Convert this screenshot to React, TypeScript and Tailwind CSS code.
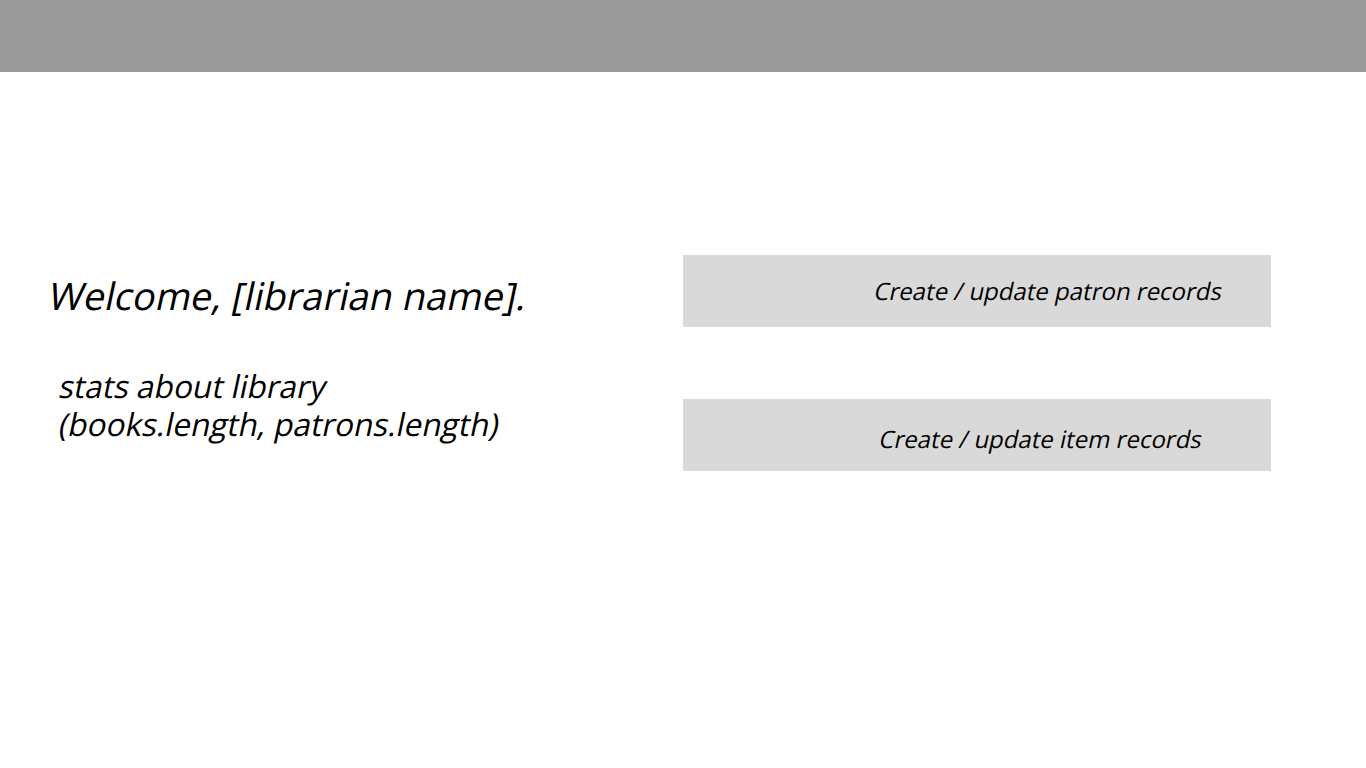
export default function App() {
  return (
    <div className="min-h-[768px] bg-white font-['Open_Sans',sans-serif] text-black">
      <header className="h-[72px] bg-[#9b9b9b]" />
      <main className="flex pt-[183px]">
        <section className="w-[683px] pl-[50px]">
          <h1 className="mt-[16px] text-[38px] leading-[48px] font-normal">
            <span className="inline-block -skew-x-12">Welcome, [librarian name].</span>
          </h1>
          <div className="mt-[48px] pl-[10px] text-[31.5px] leading-[38px]">
            <p>
              <span className="inline-block -skew-x-12">stats about library</span>
            </p>
            <p>
              <span className="inline-block -skew-x-12">(books.length, patrons.length)</span>
            </p>
          </div>
        </section>
        <section className="flex w-[588px] flex-col gap-[72px]">
          <button className="flex h-[72px] items-center bg-[#d9d9d9] pl-[192px] text-left text-[24px]">
            <span className="inline-block -skew-x-12">Create / update patron records</span>
          </button>
          <button className="flex h-[72px] items-center bg-[#d9d9d9] pl-[197px] pt-[7px] text-left text-[24px]">
            <span className="inline-block -skew-x-12">Create / update item records</span>
          </button>
        </section>
      </main>
    </div>
  );
}
